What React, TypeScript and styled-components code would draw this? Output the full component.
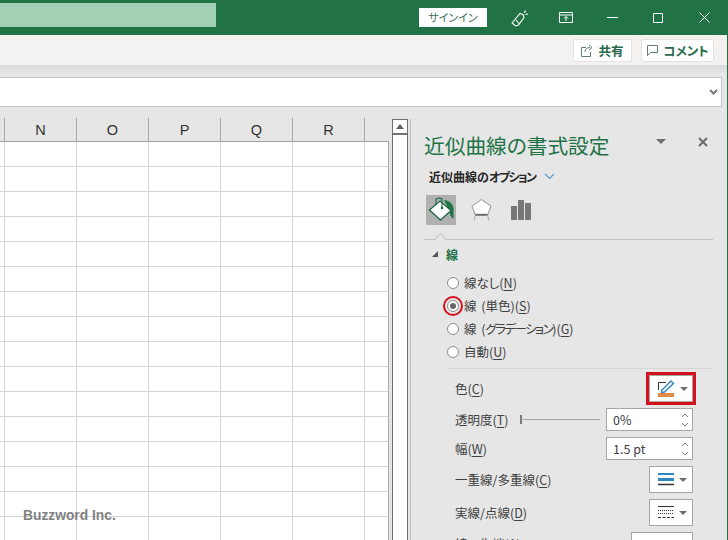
import React from "react";
import styled, { createGlobalStyle } from "styled-components";

const JP = `"Noto Sans CJK JP", "Noto Sans", sans-serif`;

const Global = createGlobalStyle`
  html, body { margin: 0; padding: 0; background: #e6e6e6; }
  *, *::before, *::after { box-sizing: border-box; }
`;

const Page = styled.div`
  position: relative;
  width: 728px;
  height: 540px;
  overflow: hidden;
  display: flex;
  flex-direction: column;
  font-family: ${JP};
  font-feature-settings: "palt";
  background: #e6e6e6;
  border-right: 1px solid #217346;
`;

const TitleBar = styled.div`
  height: 35px;
  flex: none;
  margin-right: -1px;
  background: #217346;
  display: flex;
  align-items: center;
`;

const SearchBox = styled.div`
  width: 216px;
  height: 24px;
  margin-bottom: 5px;
  background: #a3cfb4;
`;

const SignIn = styled.button`
  width: 68px;
  height: 19px;
  margin: 0 0 0 203px;
  padding: 0;
  border: 0;
  background: #fff;
  color: #3f6f58;
  font: 11px ${JP};
  font-feature-settings: "palt";
  line-height: 19px;
`;

const WinButton = styled.div`
  width: 46px;
  height: 35px;
  flex: none;
  display: flex;
  align-items: center;
  justify-content: center;
`;

const Ribbon = styled.div`
  height: 30px;
  flex: none;
  background: #f3f2f1;
  display: flex;
  align-items: center;
  justify-content: flex-end;
  gap: 9px;
  padding-right: 13px;
`;

const RibbonButton = styled.div<{ $w: number }>`
  width: ${(p) => p.$w}px;
  height: 23px;
  background: #fff;
  border: 1px solid #e4e2e0;
  border-radius: 2px;
  display: flex;
  align-items: center;
  justify-content: center;
  gap: 4px;
  color: #2b6a4c;
  font-size: 12.5px;
  font-weight: 700;
`;

const RibbonGap = styled.div`
  height: 12px;
  flex: none;
  background: linear-gradient(#d9d9d9, #e6e6e6 70%);
`;

const FormulaBar = styled.div`
  height: 30px;
  flex: none;
  margin-right: 5px;
  background: #fff;
  border: 1px solid #c6c6c6;
  border-left: 0;
  display: flex;
  align-items: center;
  justify-content: flex-end;
  padding-right: 3px;
`;

const Main = styled.div`
  flex: 1;
  min-height: 0;
  display: flex;
`;

const Sheet = styled.div`
  width: 389px;
  flex: none;
  padding-top: 11px;
  display: grid;
  grid-template-columns: 5px repeat(5, 72px) 24px;
  grid-template-rows: 24px;
  grid-auto-rows: 25px;
  align-content: start;
`;

const ColHead = styled.div<{ $last?: boolean }>`
  height: 24px;
  display: flex;
  align-items: center;
  justify-content: center;
  border-right: ${(p) => (p.$last ? "0" : "1px solid #a8a8a8")};
  border-bottom: 1px solid #a0a0a0;
  color: #333;
  font: 14.5px "Liberation Sans", Arial, sans-serif;
`;

const Cell = styled.div<{ $last?: boolean }>`
  background: #fff;
  border-right: 1px solid ${(p) => (p.$last ? "#a8a8a8" : "#d4d4d4")};
  border-bottom: 1px solid #d4d4d4;
`;

const ScrollBar = styled.div`
  width: 16px;
  flex: none;
  margin: 12px 0 0 3px;
  background: #fff;
  border: 1px solid #707070;
  border-bottom: 0;
`;

const ScrollUp = styled.div`
  height: 15px;
  background: #fff;
  border-bottom: 2px solid #707070;
  display: flex;
  align-items: center;
  justify-content: center;
  &::before {
    content: "";
    border-left: 4px solid transparent;
    border-right: 4px solid transparent;
    border-bottom: 5px solid #606060;
  }
`;

const Pane = styled.div`
  flex: 1;
  margin: 12px 0 0 2px;
  border-left: 1px solid #bcbcbc;
  padding-left: 13px;
  display: flex;
  flex-direction: column;
  overflow: hidden;
`;

const PaneHead = styled.div`
  height: 42px;
  padding-top: 10px;
  display: flex;
  align-items: center;
  flex: none;
`;

const PaneTitle = styled.div`
  flex: 1;
  color: #217346;
  font-size: 20.7px;
  line-height: 28px;
  white-space: nowrap;
`;

const HeadCaret = styled.div`
  width: 0;
  border-left: 5px solid transparent;
  border-right: 5px solid transparent;
  border-top: 5px solid #6e6e6e;
  margin: 0 31px 7px 0;
`;

const CloseBox = styled.div`
  margin: 0 18px 7px 0;
  height: 12px;
  display: flex;
`;

const SubHead = styled.div`
  height: 20px;
  margin: 5px 0 0 5px;
  flex: none;
  display: flex;
  align-items: center;
  gap: 8px;
  color: #262626;
  font-size: 12px;
  font-weight: 700;
`;

const Kana = styled.span<{ $s: number }>`
  letter-spacing: ${(p) => p.$s}px;
`;

const Tabs = styled.div`
  display: flex;
  align-items: center;
  margin: 9px 0 0 2px;
  height: 30px;
  flex: none;
`;

const Tab = styled.div<{ $active?: boolean; $w: number }>`
  width: ${(p) => p.$w}px;
  height: 30px;
  background: ${(p) => (p.$active ? "#b0b0b0" : "transparent")};
  display: flex;
  align-items: center;
  justify-content: center;
`;

const TabRule = styled.div`
  position: relative;
  height: 1px;
  margin: 14px 14px 0 0;
  flex: none;
  background: #c2c2c2;
  &::before {
    content: "";
    position: absolute;
    left: 12px;
    top: -5px;
    width: 9px;
    height: 9px;
    transform: rotate(45deg) scale(0.9);
    background: #e6e6e6;
    border-left: 1px solid #c2c2c2;
    border-top: 1px solid #c2c2c2;
  }
`;

const SectionHead = styled.div`
  height: 28px;
  flex: none;
  display: flex;
  align-items: center;
  padding-left: 8px;
  gap: 8px;
  color: #217346;
  font-size: 12px;
  font-weight: 700;
  &::before {
    content: "";
    border-left: 6px solid transparent;
    border-bottom: 6px solid #555;
  }
`;

const RadioList = styled.div`
  margin-top: 3px;
  flex: none;
  display: flex;
  flex-direction: column;
`;

const RadioRow = styled.div`
  height: 23px;
  padding-left: 23px;
  display: flex;
  align-items: center;
  gap: 5px;
  color: #404040;
  font-size: 12.5px;
  white-space: pre;
  word-spacing: 2px;
  u { text-underline-offset: 2px; }
`;

const Radio = styled.span<{ $on?: boolean; $marked?: boolean }>`
  position: relative;
  width: 12px;
  height: 12px;
  flex: none;
  border-radius: 50%;
  border: 1px solid #8c8c8c;
  background: #fff;
  display: flex;
  align-items: center;
  justify-content: center;
  &::before {
    content: "";
    display: ${(p) => (p.$on ? "block" : "none")};
    width: 6px;
    height: 6px;
    border-radius: 50%;
    background: #666;
  }
  &::after {
    content: "";
    display: ${(p) => (p.$marked ? "block" : "none")};
    position: absolute;
    left: -5px;
    top: -5px;
    width: 20px;
    height: 20px;
    border-radius: 50%;
    border: 2.5px solid #d4101c;
  }
`;

const RowRule = styled.div`
  height: 1px;
  margin: 5px 14px 0 23px;
  flex: none;
  background: #d6d6d6;
`;

const FieldList = styled.div`
  flex: none;
  padding: 6px 34px 0 31px;
  display: flex;
  flex-direction: column;
  gap: 6px;
`;

const FieldRow = styled.div`
  display: flex;
  align-items: center;
  justify-content: space-between;
  color: #404040;
  font-size: 12.5px;
  white-space: pre;
  u { text-underline-offset: 2px; }
`;

const FieldLabel = styled.div<{ $w?: number }>`
  flex: ${(p) => (p.$w ? `0 0 ${p.$w}px` : "1")};
`;

const PickButton = styled.div<{ $marked?: boolean }>`
  position: relative;
  width: 44px;
  height: 27px;
  background: #fff;
  border: 1px solid #a6a6a6;
  display: flex;
  align-items: center;
  padding-left: 8px;
  gap: 5px;
  &::after {
    content: "";
    border-left: 4px solid transparent;
    border-right: 4px solid transparent;
    border-top: 4px solid #6e6e6e;
  }
  &::before {
    content: "";
    display: ${(p) => (p.$marked ? "block" : "none")};
    position: absolute;
    left: -4px;
    top: -4px;
    width: 50px;
    height: 33px;
    border: 3px solid #d4101c;
  }
`;

const Spin = styled.div<{ $w?: number }>`
  width: ${(p) => p.$w ?? 87}px;
  height: 23px;
  background: #fff;
  border: 1px solid #a6a6a6;
  display: flex;
  align-items: center;
  justify-content: space-between;
  padding: 0 3px 0 6px;
  color: #404040;
  font-size: 12.5px;
`;

const SpinArrows = styled.div`
  display: flex;
  flex-direction: column;
  gap: 4px;
`;

const Slider = styled.div`
  width: 80px;
  height: 9px;
  margin-right: 6px;
  display: flex;
  align-items: center;
  &::before {
    content: "";
    width: 2px;
    height: 9px;
    background: #7a7a7a;
    margin-right: -1px;
  }
  &::after {
    content: "";
    flex: 1;
    height: 1px;
    background: #a6a6a6;
  }
`;

const Watermark = styled.div`
  position: absolute;
  left: 23px;
  top: 507px;
  color: #7b7b7b;
  font: 700 13.8px "Liberation Sans", Arial, sans-serif;
  line-height: 18px;
  opacity: 0.95;
`;

const Chevron = ({ up }: { up?: boolean }) => (
  <svg width="8" height="5" viewBox="0 0 8 5">
    <path d={up ? "M1 4l3-3 3 3" : "M1 1l3 3 3-3"} fill="none" stroke="#808080" />
  </svg>
);

const columns = ["", "N", "O", "P", "Q", "R", ""];
const rowCount = 16;

export default function App() {
  return (
    <Page>
      <Global />
      <TitleBar>
        <SearchBox />
        <SignIn>サインイン</SignIn>
        <WinButton style={{ marginLeft: 10 }}>
          <svg width="18" height="18" viewBox="0 0 18 18" fill="none" stroke="#fff" strokeWidth="1.1">
            <path d="M1 14l8-9.500 3.500 1.500.5 2.500-5.500 7.500-3 1zM5 11l3 3.500M14.500 1.500L13.500 4M17 5l-2.500.5" />
          </svg>
        </WinButton>
        <WinButton>
          <svg width="14" height="11" viewBox="0 0 14 11" fill="none" stroke="#fff" strokeWidth="1">
            <path d="M.5.5h13v10H.5zM.5 3h13M7 9V4.500M5 6.500l2-2 2 2" />
          </svg>
        </WinButton>
        <WinButton>
          <svg width="11" height="1" viewBox="0 0 11 1">
            <path d="M0 .5h11" stroke="#fff" />
          </svg>
        </WinButton>
        <WinButton>
          <svg width="10" height="10" viewBox="0 0 10 10">
            <path d="M.5.5h9v9h-9z" fill="none" stroke="#fff" />
          </svg>
        </WinButton>
        <WinButton>
          <svg width="11" height="11" viewBox="0 0 11 11">
            <path d="M.5.5l10 10M10.500.5l-10 10" stroke="#fff" />
          </svg>
        </WinButton>
      </TitleBar>
      <Ribbon>
        <RibbonButton $w={59}>
          <svg width="13" height="13" viewBox="0 0 13 13" fill="none" stroke="#5f7f70">
            <path d="M5 3.500H.5v9h9V8M4 8c0-3 2-4.500 5-4.500M8 1l3 2.500L8 6" />
          </svg>
          共有
        </RibbonButton>
        <RibbonButton $w={73}>
          <svg width="13" height="13" viewBox="0 0 13 13" fill="none" stroke="#5f7f70">
            <path d="M1.500 1.500h10v7h-7l-3 3z" />
          </svg>
          コメント
        </RibbonButton>
      </Ribbon>
      <RibbonGap />
      <FormulaBar>
        <svg width="9" height="6" viewBox="0 0 9 6">
          <path d="M1 1l3.500 3.500L8 1" fill="none" stroke="#777" strokeWidth="2" />
        </svg>
      </FormulaBar>
      <Main>
        <Sheet>
          {columns.map((c, i) => (
            <ColHead key={i} $last={i === columns.length - 1}>
              {c}
            </ColHead>
          ))}
          {Array.from({ length: rowCount * columns.length }).map((_, i) => (
            <Cell key={i} $last={i % columns.length === columns.length - 1} />
          ))}
        </Sheet>
        <ScrollBar>
          <ScrollUp />
        </ScrollBar>
        <Pane>
          <PaneHead>
            <PaneTitle>近似曲線の書式設定</PaneTitle>
            <HeadCaret />
            <CloseBox>
              <svg width="12" height="12" viewBox="0 0 12 12">
                <path d="M2 2l8 8M10 2l-8 8" stroke="#6a6a6a" strokeWidth="2" />
              </svg>
            </CloseBox>
          </PaneHead>
          <SubHead>
            <span>
              近似曲線の<Kana $s={-1.5}>オプション</Kana>
            </span>
            <svg width="11" height="7" viewBox="0 0 11 7">
              <path d="M1 1l4.500 4.500L10 1" fill="none" stroke="#5b9bd5" strokeWidth="1.200" />
            </svg>
          </SubHead>
          <Tabs>
            <Tab $active $w={30}>
              <svg width="30" height="30" viewBox="0 0 30 30">
                <path d="M18 5c5 .5 9 3.500 9.500 8.500L27.500 24 24.500 21 23 15z" fill="#217346" />
                <path d="M14 6l11 9.500-10.500 9.500L3.500 15z" fill="#fff" stroke="#1f6b45" strokeWidth="1.300" />
                <path d="M10 9.500V5c0-2.500 6-2.500 6 0v7" fill="none" stroke="#1f6b45" strokeWidth="1.100" />
                <circle cx="16" cy="13" r="1.300" fill="#1f6b45" />
              </svg>
            </Tab>
            <Tab $w={15} />
            <Tab $w={21}>
              <svg width="22" height="24" viewBox="0 0 22 24">
                <path d="M11 1L21 8l-3.500 9h-13L1 8z" fill="#fff" stroke="#8a8a8a" />
                <path d="M4.500 17h13" stroke="#6a6a6a" strokeWidth="2" />
                <path d="M4.500 17L3.500 23M17.500 17l1 6" stroke="#aaa" />
              </svg>
            </Tab>
            <Tab $w={19} />
            <Tab $w={20}>
              <svg width="20" height="20" viewBox="0 0 20 20">
                <path d="M0 6h6v14H0zM7 0h6v20H7zM14 3h6v17h-6z" fill="#777" />
              </svg>
            </Tab>
          </Tabs>
          <TabRule />
          <SectionHead>線</SectionHead>
          <RadioList>
            <RadioRow>
              <Radio />
              <span>線なし(<u>N</u>)</span>
            </RadioRow>
            <RadioRow>
              <Radio $on $marked />
              <span>線 (単色)(<u>S</u>)</span>
            </RadioRow>
            <RadioRow>
              <Radio />
              <span>線 (<Kana $s={-1.6}>グラデーション</Kana>)(<u>G</u>)</span>
            </RadioRow>
            <RadioRow>
              <Radio />
              <span>自動(<u>U</u>)</span>
            </RadioRow>
          </RadioList>
          <RowRule />
          <FieldList>
            <FieldRow>
              <FieldLabel>色(<u>C</u>)</FieldLabel>
              <PickButton $marked>
                <svg width="17" height="17" viewBox="0 0 17 17">
                  <path d="M.5 10V2.500H8" fill="none" stroke="#333" />
                  <path d="M3.500 10.500L13 1l2.500 2.500-9 8.500-3 .5z" fill="#fff" stroke="#2e86c1" strokeWidth="1.400" />
                  <path d="M0 13h16v4H0z" fill="#e08a48" />
                </svg>
              </PickButton>
            </FieldRow>
            <FieldRow>
              <FieldLabel $w={64}>透明度(<u>T</u>)</FieldLabel>
              <Slider />
              <Spin>
                0%
                <SpinArrows>
                  <Chevron up />
                  <Chevron />
                </SpinArrows>
              </Spin>
            </FieldRow>
            <FieldRow>
              <FieldLabel>幅(<u>W</u>)</FieldLabel>
              <Spin>
                1.5 pt
                <SpinArrows>
                  <Chevron up />
                  <Chevron />
                </SpinArrows>
              </Spin>
            </FieldRow>
            <FieldRow>
              <FieldLabel>一重線/多重線(<u>C</u>)</FieldLabel>
              <PickButton>
                <svg width="16" height="13" viewBox="0 0 16 13">
                  <path d="M0 1h16" stroke="#2e86c1" strokeWidth="2" />
                  <path d="M0 6.500h16" stroke="#2e86c1" strokeWidth="3" />
                  <path d="M0 11.500h16" stroke="#333" strokeWidth="1.500" />
                </svg>
              </PickButton>
            </FieldRow>
            <FieldRow>
              <FieldLabel>実線/点線(<u>D</u>)</FieldLabel>
              <PickButton>
                <svg width="16" height="13" viewBox="0 0 16 13">
                  <path d="M0 .5h16" stroke="#333" />
                  <path d="M0 4.500h16M0 7.500h16" stroke="#333" strokeDasharray="1 1" />
                  <path d="M0 11.500h16" stroke="#333" strokeDasharray="3 1.500" />
                </svg>
              </PickButton>
            </FieldRow>
            <FieldRow>
              <FieldLabel>線の先端(<u>A</u>)</FieldLabel>
              <Spin $w={62} />
            </FieldRow>
          </FieldList>
        </Pane>
      </Main>
      <Watermark>Buzzword Inc.</Watermark>
    </Page>
  );
}
